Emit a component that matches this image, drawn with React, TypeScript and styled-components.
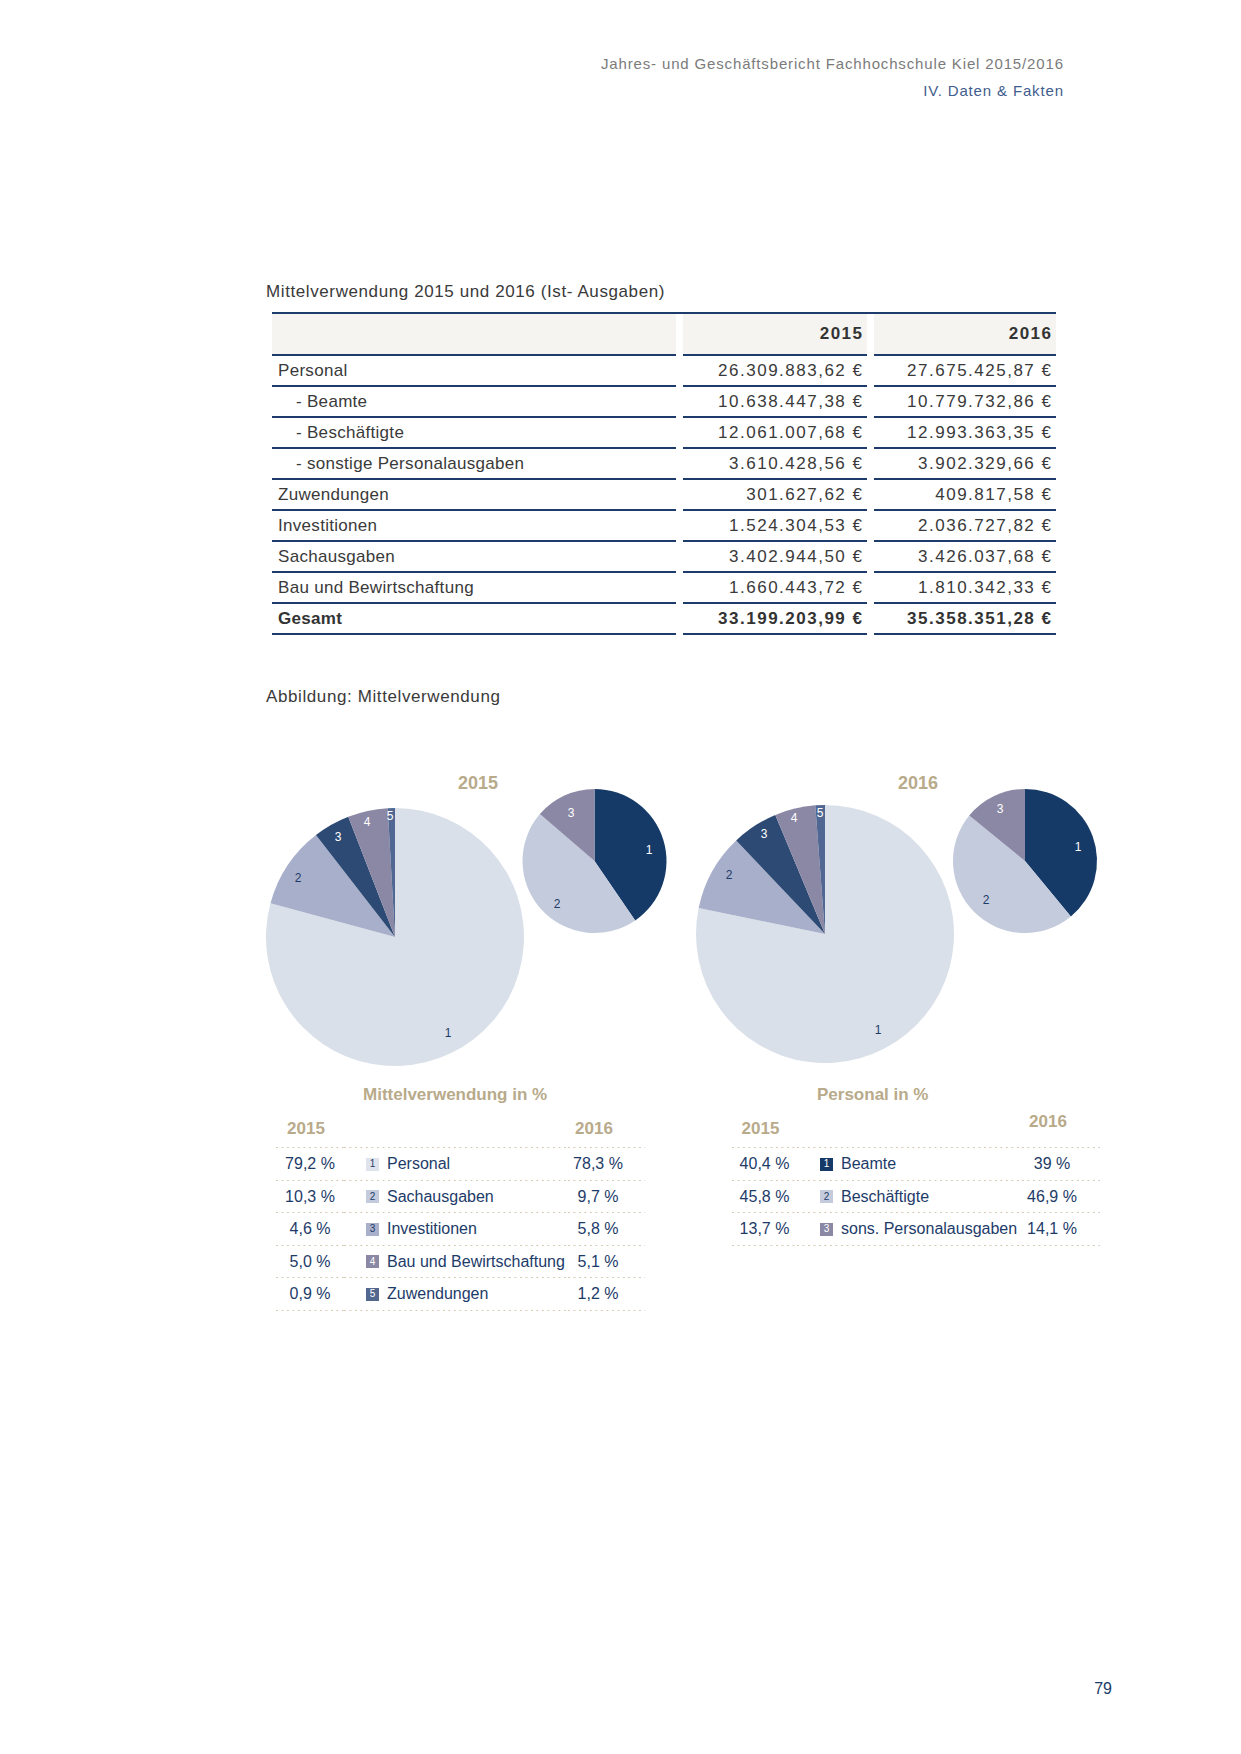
import React from 'react';
import styled, { createGlobalStyle } from 'styled-components';

const NAVY = '#1d3b69';
const TAN = '#b8aa8a';

const GlobalStyle = createGlobalStyle`
  html, body { margin: 0; padding: 0; background: #ffffff; }
  body { font-family: "Liberation Sans", Arial, sans-serif; }
`;

const Page = styled.div`
  width: 1241px;
  min-height: 1754px;
  display: flex;
  flex-direction: column;
  box-sizing: border-box;
`;

const Header = styled.header`
  padding: 52px 178px 0 0;
  display: flex;
  flex-direction: column;
  align-items: flex-end;
`;

const HeaderLine = styled.div<{ $accent?: boolean }>`
  font-size: 15px;
  line-height: 24px;
  letter-spacing: 0.85px;
  margin-right: -0.85px;
  color: ${(p) => (p.$accent ? '#3f5d8d' : '#7b7b7b')};
  margin-top: ${(p) => (p.$accent ? '3px' : '0')};
`;

const Main = styled.main`
  padding-left: 266px;
  display: flex;
  flex-direction: column;
`;

const Caption = styled.div<{ $top: number }>`
  margin-top: ${(p) => p.$top}px;
  font-size: 17px;
  line-height: 24px;
  letter-spacing: 0.6px;
  color: #3a3a3a;
`;

const Table = styled.div`
  margin: 8px 0 0 6px;
  width: 784px;
  display: grid;
  grid-template-columns: 404px 184px 182px;
  column-gap: 7px;
  border-top: 2px solid #1d3c6c;
  font-size: 17px;
  color: #3a3a3a;
`;

const Cell = styled.div<{ $head?: boolean; $num?: boolean; $indent?: boolean; $bold?: boolean }>`
  height: ${(p) => (p.$head ? 40 : 29)}px;
  line-height: ${(p) => (p.$head ? 40 : 29)}px;
  border-bottom: 2px solid #1d3c6c;
  background: ${(p) => (p.$head ? '#f5f4f0' : 'transparent')};
  text-align: ${(p) => (p.$num ? 'right' : 'left')};
  padding: ${(p) => (p.$num ? '0 3.5px 0 0' : p.$indent ? '0 0 0 24px' : '0 0 0 6px')};
  letter-spacing: ${(p) => (p.$num ? '1.5px' : '0.3px')};
  font-weight: ${(p) => (p.$bold ? 700 : 400)};
  color: ${(p) => (p.$bold ? '#333333' : '#3a3a3a')};
  white-space: nowrap;
`;

const ChartGrid = styled.section`
  margin: 61px 0 0 -4px;
  display: grid;
  grid-template-columns: 430px 430px;
`;

const ChartColumn = styled.div`
  display: flex;
  flex-direction: column;
`;

const ChartSvg = styled.svg`
  display: block;
  width: 430px;
  height: 300px;
`;

const PieLabel = styled.text<{ $light?: boolean }>`
  font-family: "Liberation Sans", Arial, sans-serif;
  font-size: 12px;
  fill: ${(p) => (p.$light ? '#ffffff' : NAVY)};
`;

const YearLabel = styled.text`
  font-family: "Liberation Sans", Arial, sans-serif;
  font-size: 18px;
  font-weight: 700;
  fill: ${TAN};
`;

const LegendTitle = styled.div<{ $left: number }>`
  margin: 13px 0 0 ${(p) => p.$left}px;
  font-size: 17px;
  line-height: 24px;
  font-weight: 700;
  color: ${TAN};
`;

const Legend = styled.div<{ $left: number; $cols: string }>`
  margin-left: ${(p) => p.$left}px;
  width: 369px;
  display: grid;
  grid-template-columns: ${(p) => p.$cols};
`;

const dotted = `
  background-image: linear-gradient(to right, #d3c9b0 0 1.5px, transparent 1.5px);
  background-size: 5.5px 1px;
  background-repeat: repeat-x;
  background-position: left bottom;
`;

const LegendHead = styled.div<{ $pt: number }>`
  height: 41px;
  box-sizing: border-box;
  padding: ${(p) => p.$pt}px 8px 0 0;
  text-align: center;
  font-size: 17px;
  line-height: 24px;
  font-weight: 700;
  color: ${TAN};
  ${dotted}
`;

const LegendCell = styled.div<{ $center?: boolean; $pad?: number }>`
  height: 32.5px;
  display: flex;
  align-items: center;
  justify-content: ${(p) => (p.$center ? 'center' : 'flex-start')};
  padding-left: ${(p) => p.$pad || 0}px;
  font-size: 16px;
  color: ${NAVY};
  white-space: nowrap;
  ${dotted}
`;

const Swatch = styled.span<{ $bg: string; $fg: string }>`
  display: inline-flex;
  align-items: center;
  justify-content: center;
  width: 13px;
  height: 13px;
  margin-right: 8px;
  background: ${(p) => p.$bg};
  color: ${(p) => p.$fg};
  font-size: 10px;
  line-height: 1;
`;

const Footer = styled.footer`
  margin-top: auto;
  padding: 0 129px 53px 0;
  text-align: right;
  font-size: 16px;
  line-height: 24px;
  color: ${NAVY};
`;

type Slice = { v: number; color: string; label: string; lx: number; ly: number; light?: boolean };

function slicePath(cx: number, cy: number, r: number, a0: number, a1: number) {
  const pt = (f: number) => [cx + r * Math.sin(2 * Math.PI * f), cy - r * Math.cos(2 * Math.PI * f)];
  const [x0, y0] = pt(a0);
  const [x1, y1] = pt(a1);
  const large = a1 - a0 > 0.5 ? 1 : 0;
  return `M${cx},${cy} L${x0.toFixed(2)},${y0.toFixed(2)} A${r},${r} 0 ${large} 1 ${x1.toFixed(2)},${y1.toFixed(2)} Z`;
}

const Pie: React.FC<{ cx: number; cy: number; r: number; slices: Slice[] }> = ({ cx, cy, r, slices }) => {
  const total = slices.reduce((s, x) => s + x.v, 0);
  let acc = 0;
  return (
    <g>
      {slices.map((s, i) => {
        const a0 = acc / total;
        acc += s.v;
        const a1 = acc / total;
        return <path key={i} d={slicePath(cx, cy, r, a0, a1)} fill={s.color} />;
      })}
      {slices.map((s, i) => (
        <PieLabel key={'l' + i} x={s.lx} y={s.ly} $light={s.light} textAnchor="middle" dominantBaseline="central">
          {s.label}
        </PieLabel>
      ))}
    </g>
  );
};

const BIG_COLORS = ['#dae0e9', '#a8afca', '#2d4a74', '#8b88a5', '#4f6792'];
const SMALL_COLORS = ['#163a68', '#c3cbdc', '#8b88a5'];

const charts = [
  {
    year: '2015',
    yearX: 216,
    big: { cx: 133, cy: 167, vals: [79.2, 10.3, 4.6, 5.0, 0.9], pos: [[186, 263], [36, 108], [76, 67], [105, 52], [128, 46]] },
    small: { cx: 332.5, cy: 91, vals: [40.4, 45.8, 13.7], pos: [[387, 80], [295, 134], [309, 43]] },
  },
  {
    year: '2016',
    yearX: 226,
    big: { cx: 133, cy: 164, vals: [78.3, 9.7, 5.8, 5.1, 1.2], pos: [[186, 260], [37, 105], [72, 64], [102, 48], [128, 43]] },
    small: { cx: 333, cy: 91, vals: [39, 46.9, 14.1], pos: [[386, 77], [294, 130], [308, 39]] },
  },
];

const tableRows = [
  { label: 'Personal', a: '26.309.883,62 €', b: '27.675.425,87 €' },
  { label: '- Beamte', a: '10.638.447,38 €', b: '10.779.732,86 €', indent: true },
  { label: '- Beschäftigte', a: '12.061.007,68 €', b: '12.993.363,35 €', indent: true },
  { label: '- sonstige Personalausgaben', a: '3.610.428,56 €', b: '3.902.329,66 €', indent: true },
  { label: 'Zuwendungen', a: '301.627,62 €', b: '409.817,58 €' },
  { label: 'Investitionen', a: '1.524.304,53 €', b: '2.036.727,82 €' },
  { label: 'Sachausgaben', a: '3.402.944,50 €', b: '3.426.037,68 €' },
  { label: 'Bau und Bewirtschaftung', a: '1.660.443,72 €', b: '1.810.342,33 €' },
  { label: 'Gesamt', a: '33.199.203,99 €', b: '35.358.351,28 €', bold: true },
];

const legends = [
  {
    title: 'Mittelverwendung in %',
    titleLeft: 101,
    left: 14,
    cols: '68px 224px 60px 17px',
    pad: 22,
    headPt: [10, 10],
    rows: [
      { a: '79,2 %', label: 'Personal', b: '78,3 %', bg: '#dfe4ec', fg: NAVY },
      { a: '10,3 %', label: 'Sachausgaben', b: '9,7 %', bg: '#c3cbdc', fg: NAVY },
      { a: '4,6 %', label: 'Investitionen', b: '5,8 %', bg: '#a9b0cb', fg: NAVY },
      { a: '5,0 %', label: 'Bau und Bewirtschaftung', b: '5,1 %', bg: '#8b88a5', fg: '#ffffff' },
      { a: '0,9 %', label: 'Zuwendungen', b: '1,2 %', bg: '#53688f', fg: '#ffffff' },
    ],
  },
  {
    title: 'Personal in %',
    titleLeft: 125,
    left: 40,
    cols: '65px 225px 60px 18px',
    pad: 23,
    headPt: [10, 3],
    rows: [
      { a: '40,4 %', label: 'Beamte', b: '39 %', bg: '#163a68', fg: '#ffffff' },
      { a: '45,8 %', label: 'Beschäftigte', b: '46,9 %', bg: '#c3cbdc', fg: NAVY },
      { a: '13,7 %', label: 'sons. Personalausgaben', b: '14,1 %', bg: '#8b88a5', fg: '#ffffff' },
    ],
  },
];

export default function App() {
  return (
    <>
      <GlobalStyle />
      <Page>
        <Header>
          <HeaderLine>Jahres- und Geschäftsbericht Fachhochschule Kiel 2015/2016</HeaderLine>
          <HeaderLine $accent>IV. Daten &amp; Fakten</HeaderLine>
        </Header>
        <Main>
          <Caption $top={177}>Mittelverwendung 2015 und 2016 (Ist- Ausgaben)</Caption>
          <Table>
            <Cell $head />
            <Cell $head $num $bold>2015</Cell>
            <Cell $head $num $bold>2016</Cell>
            {tableRows.map((r) => (
              <React.Fragment key={r.label}>
                <Cell $indent={r.indent} $bold={r.bold}>{r.label}</Cell>
                <Cell $num $bold={r.bold}>{r.a}</Cell>
                <Cell $num $bold={r.bold}>{r.b}</Cell>
              </React.Fragment>
            ))}
          </Table>
          <Caption $top={50}>Abbildung: Mittelverwendung</Caption>
          <ChartGrid>
            {charts.map((c, ci) => {
              const lg = legends[ci];
              const bigSlices: Slice[] = c.big.vals.map((v, i) => ({
                v,
                color: BIG_COLORS[i],
                label: String(i + 1),
                lx: c.big.pos[i][0],
                ly: c.big.pos[i][1],
                light: i >= 2,
              }));
              const smallSlices: Slice[] = c.small.vals.map((v, i) => ({
                v,
                color: SMALL_COLORS[i],
                label: String(i + 1),
                lx: c.small.pos[i][0],
                ly: c.small.pos[i][1],
                light: i !== 1,
              }));
              return (
                <ChartColumn key={c.year}>
                  <ChartSvg viewBox="0 0 430 300">
                    <YearLabel x={c.yearX} y={13} textAnchor="middle" dominantBaseline="central">
                      {c.year}
                    </YearLabel>
                    <Pie cx={c.big.cx} cy={c.big.cy} r={129} slices={bigSlices} />
                    <Pie cx={c.small.cx} cy={c.small.cy} r={72} slices={smallSlices} />
                  </ChartSvg>
                  <LegendTitle $left={lg.titleLeft}>{lg.title}</LegendTitle>
                  <Legend $left={lg.left} $cols={lg.cols}>
                    <LegendHead $pt={lg.headPt[0]}>2015</LegendHead>
                    <LegendHead $pt={lg.headPt[0]} />
                    <LegendHead $pt={lg.headPt[1]}>2016</LegendHead>
                    <LegendHead $pt={0} />
                    {lg.rows.map((r, ri) => (
                      <React.Fragment key={r.label}>
                        <LegendCell $center>{r.a}</LegendCell>
                        <LegendCell $pad={lg.pad}>
                          <Swatch $bg={r.bg} $fg={r.fg}>{ri + 1}</Swatch>
                          {r.label}
                        </LegendCell>
                        <LegendCell $center>{r.b}</LegendCell>
                        <LegendCell />
                      </React.Fragment>
                    ))}
                  </Legend>
                </ChartColumn>
              );
            })}
          </ChartGrid>
        </Main>
        <Footer>79</Footer>
      </Page>
    </>
  );
}
